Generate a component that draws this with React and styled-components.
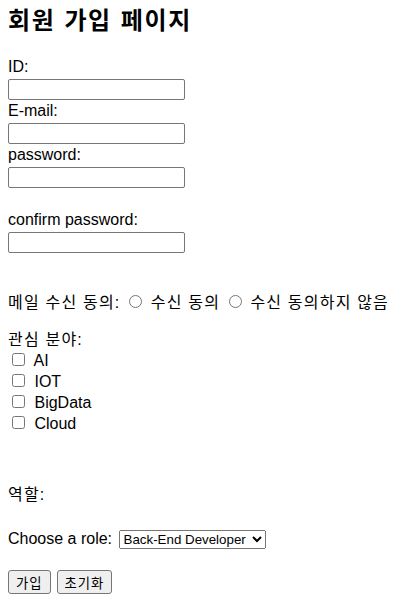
import styled, { createGlobalStyle } from 'styled-components';

const GlobalStyle = createGlobalStyle`
	body {
		margin: 0;
		background: #fff;
		color: #000;
		font-family: "Liberation Sans", "Noto Sans CJK KR", sans-serif;
		font-size: 16px;
	}
`

const Page = styled.div`
	padding: 0 8px;
	width: 396px;
`
const Title = styled.h2`
	margin: 0;
	height: 56px;
	padding-top: 3px;
	box-sizing: border-box;
	font-family: "Noto Sans CJK KR", sans-serif;
	font-size: 24px;
	font-weight: 700;
	line-height: 32px;
	letter-spacing: 1.6px;
	word-spacing: 2px;
`
const Line = styled.div`
	height: 21px;
	line-height: 21px;
	margin-top: ${({ $top }) => $top || 0}px;
	letter-spacing: ${({ $ko }) => ($ko ? '1.2px' : 'normal')};
	white-space: nowrap;
`
const InputRow = styled.div`
	height: 23px;
	padding-top: 2px;
	box-sizing: border-box;
`
const TextInput = styled.input`
	display: block;
	margin: 0;
	width: 177px;
	height: 21px;
	box-sizing: border-box;
	padding: 1px 2px;
	border: 1px solid #767676;
	border-radius: 2px;
	font: 13.33px "Liberation Sans", sans-serif;
`
const Radio = styled.input.attrs({ type: 'radio' })`
	width: 13px;
	height: 13px;
	margin: 3px 3px 0 3px;
`
const Check = styled.input.attrs({ type: 'checkbox' })`
	width: 13px;
	height: 13px;
	margin: 3px 5px 0 4px;
`
const RoleSelect = styled.select`
	width: 147px;
	height: 19px;
	margin-left: 2px;
	font: 13.33px "Liberation Sans", sans-serif;
	color: #000;
`
const Buttons = styled.div`
	display: flex;
	gap: 6px;
	margin-top: 21px;
`
const Button = styled.button`
	height: 24px;
	padding: 1px 7px;
	border: 1px solid #767676;
	border-radius: 3px;
	background: #efefef;
	color: #000;
	font: 13.33px "Liberation Sans", "Noto Sans CJK KR", sans-serif;
	letter-spacing: 1px;
`

const interests = ['AI', 'IOT', 'BigData', 'Cloud'];

const App = () => {
	return (
		<>
			<GlobalStyle />
			<Page>
				<Title>회원 가입 페이지</Title>
				<form onSubmit={(e) => e.preventDefault()}>
					<Line>ID:</Line>
					<InputRow><TextInput type="text" /></InputRow>
					<Line>E-mail:</Line>
					<InputRow><TextInput type="email" /></InputRow>
					<Line>password:</Line>
					<InputRow><TextInput type="password" /></InputRow>
					<Line $top={21}>confirm password:</Line>
					<InputRow><TextInput type="password" /></InputRow>

					<Line $top={39} $ko>
						메일 수신 동의: <Radio name="mail" /> 수신 동의 <Radio name="mail" /> 수신 동의하지 않음
					</Line>

					<Line $top={16} $ko>관심 분야:</Line>
					{interests.map((item) => (
						<Line key={item}>
							<Check /> {item}
						</Line>
					))}

					<Line $top={50} $ko>역할:</Line>
					<Line $top={23}>
						Choose a role:{' '}
						<RoleSelect defaultValue="backend">
							<option value="backend">Back-End Developer</option>
							<option value="frontend">Front-End Developer</option>
						</RoleSelect>
					</Line>

					<Buttons>
						<Button type="submit">가입</Button>
						<Button type="reset">초기화</Button>
					</Buttons>
				</form>
			</Page>
		</>
	);
}

export default App;
